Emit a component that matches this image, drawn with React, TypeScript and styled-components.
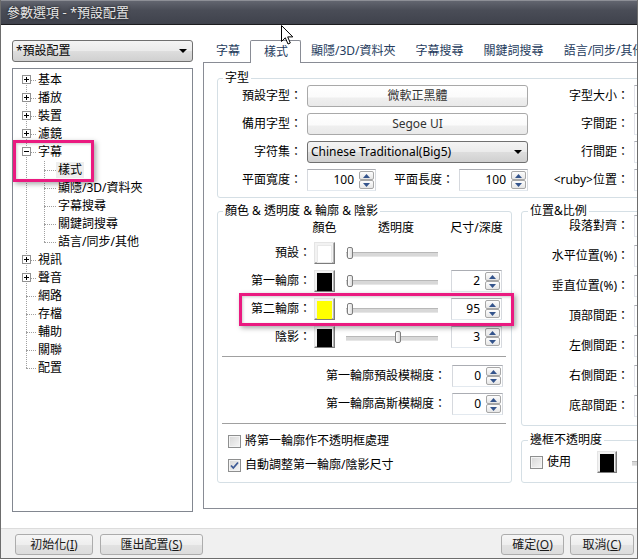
import React from "react";
import styled, { createGlobalStyle, css } from "styled-components";

const GlobalStyle = createGlobalStyle`
  html, body { margin: 0; padding: 0; background: #fff; }
  body {
    font-family: "Noto Sans", "Noto Sans CJK TC", sans-serif;
    font-size: 12px;
    line-height: 16px;
    color: #000;
  }
  * { box-sizing: border-box; }
`;

const Window = styled.div`
  position: relative;
  width: 638px;
  height: 559px;
  overflow: hidden;
  display: flex;
  flex-direction: column;
  background: #fff;
  border: 1px solid #6d6d6d;
  border-top: none;
`;

const TitleBar = styled.div`
  height: 25px;
  flex: none;
  margin: 0 -1px;
  padding-left: 7px;
  background: linear-gradient(#62656f, #4a4d57 40%, #3f424c);
  border-top: 1px solid #8d8f96;
  border-bottom: 1px solid #1c1c1f;
  color: #e6e6e6;
  font-size: 13px;
  line-height: 23px;
  text-shadow: 0 0 3px rgba(0, 0, 0, 0.8);
`;

const Body = styled.div`
  display: flex;
  align-items: flex-start;
  height: 503px;
  flex: none;
  padding-top: 15px;
`;

const Sidebar = styled.div`
  flex: none;
  width: 181px;
  margin-left: 11px;
  display: flex;
  flex-direction: column;
  gap: 6px;
`;

const DropBox = styled.div<{ $w?: number }>`
  width: ${p => (p.$w ? `${p.$w}px` : "100%")};
  height: 22px;
  display: flex;
  align-items: center;
  justify-content: space-between;
  padding: 0 5px 0 3px;
  border: 1px solid #707070;
  border-radius: 3px;
  background: linear-gradient(#f4f4f4, #ebebeb 48%, #dddddd 52%, #d0d0d0);
  white-space: nowrap;
`;

const DropArrow = styled.span`
  width: 0;
  height: 0;
  border-left: 4px solid transparent;
  border-right: 4px solid transparent;
  border-top: 4px solid #000;
`;

const Tree = styled.div`
  height: 444px;
  border: 1px solid #828790;
  padding-top: 2px;
`;

const TreeList = styled.div`
  position: relative;
  padding-left: 9px;
  &::before {
    content: "";
    position: absolute;
    left: 13px;
    top: 9px;
    height: 288px;
    border-left: 1px dotted #a0a0a0;
  }
`;

const TreeRow = styled.div<{ $child?: boolean }>`
  display: flex;
  align-items: center;
  height: 18px;
  margin-left: ${p => (p.$child ? 18 : 0)}px;
`;

const Branch = styled.span<{ $w: number }>`
  position: relative;
  flex: none;
  width: ${p => p.$w}px;
  height: 18px;
  &::after {
    content: "";
    position: absolute;
    left: 4px;
    right: 1px;
    top: 9px;
    border-top: 1px dotted #a0a0a0;
  }
`;

const ExpanderBox = styled.span`
  position: absolute;
  z-index: 1;
  left: 0;
  top: 4px;
  width: 9px;
  height: 9px;
  display: flex;
  background: #fff;
`;

const TreeLabel = styled.span<{ $selected?: boolean }>`
  padding: 0 1px;
  white-space: nowrap;
  ${p => p.$selected && css`
    background: #eeeeee;
    padding: 0 2px;
    margin-left: -1px;
  `}
`;

const ChildGroup = styled.div`
  position: relative;
  &::before {
    content: "";
    position: absolute;
    left: 22px;
    top: 0;
    height: 81px;
    border-left: 1px dotted #a0a0a0;
  }
`;

const TabArea = styled.div`
  margin-left: 10px;
  width: 470px;
  flex: none;
`;

const TabStrip = styled.div`
  display: flex;
  align-items: flex-end;
  height: 22px;
`;

const Tab = styled.div<{ $active?: boolean }>`
  height: 22px;
  padding: 0 10px;
  line-height: 22px;
  color: #263c5e;
  white-space: nowrap;
  &:first-child { margin-left: 3px; }
  ${p => p.$active && css`
    position: relative;
    z-index: 1;
    height: 23px;
    margin-bottom: -1px;
    padding: 0 12px 0 13px;
    line-height: 22px;
    background: #fff;
    border: 1px solid #898c95;
    border-bottom: none;
    border-radius: 2px 2px 0 0;
  `}
`;

const TabPanel = styled.div`
  height: 447px;
  border: 1px solid #898c95;
  padding-left: 13px;
  background: #fff;
`;

const Group = styled.div<{ $w?: number }>`
  position: relative;
  width: ${p => (p.$w ? `${p.$w}px` : "auto")};
  border: 1px solid #d5dfe5;
  border-radius: 3px;
`;

const Legend = styled.span<{ $left?: number }>`
  position: absolute;
  top: -9px;
  left: ${p => p.$left ?? 5}px;
  padding: 0 2px;
  background: #fff;
  white-space: nowrap;
`;

const FontGrid = styled.div`
  display: grid;
  grid-template-columns: 77px 221px 96px 40px;
  grid-auto-rows: 22px;
  column-gap: 5px;
  row-gap: 6px;
  align-items: center;
  padding: 6px 0 6px 7px;
`;

const Label = styled.span`
  text-align: right;
  white-space: nowrap;
`;

const FieldButton = styled.div`
  height: 22px;
  border: 1px solid #a9a9a9;
  border-radius: 3px;
  background: linear-gradient(#fff, #fbfbfb 55%, #efefef 60%, #e9e9e9);
  color: #333;
  text-align: center;
  line-height: 20px;
`;

const TextBox = styled.div`
  height: 22px;
  border: 1px solid #abadb3;
  border-color: #abadb3 #dbdfe6 #e3e9ef #e2e3ea;
  background: #fff;
`;

const PairRow = styled.div`
  display: flex;
  align-items: center;
`;

const SpinWrap = styled.div<{ $w: number }>`
  flex: none;
  width: ${p => p.$w}px;
  height: 22px;
  display: flex;
  align-items: center;
  padding: 1px;
  border: 1px solid #b9bcc2;
  border-color: #abadb3 #d6d9de #e3e9ef #d6d9de;
  background: #fff;
`;

const SpinValue = styled.span`
  flex: 1;
  text-align: right;
  padding-right: 5px;
`;

const SpinButtons = styled.div`
  display: flex;
  flex-direction: column;
  width: 15px;
  height: 18px;
`;

const SpinBtn = styled.div`
  flex: 1;
  display: flex;
  align-items: center;
  justify-content: center;
  border: 1px solid #a7a7a7;
  border-radius: 2px;
  background: linear-gradient(#fdfdfd, #e6e6e6);
`;

const LowerRow = styled.div`
  display: flex;
  align-items: flex-start;
  gap: 9px;
  margin-top: 13px;
`;

const ColorGrid = styled.div`
  display: grid;
  grid-template-columns: 96px 21px 116px 51px;
  grid-template-rows: 16px;
  grid-auto-rows: 22px;
  row-gap: 6px;
  align-items: center;
  padding-top: 8px;
`;

const RowLabel = styled.span`
  text-align: right;
  padding-right: 3px;
  white-space: nowrap;
`;

const ColHead = styled.span`
  justify-self: center;
  white-space: nowrap;
`;

const Swatch = styled.div<{ $color: string }>`
  width: 21px;
  height: 22px;
  padding: 2px;
  border: 1px solid;
  border-color: #e4e4e4 #7c7c7c #7c7c7c #e4e4e4;
  background: #f2f2f2;
  box-shadow: inset -1px -1px 0 #b4b4b4;
  &::after {
    content: "";
    display: block;
    height: 100%;
    background: ${p => p.$color};
    border: 1px solid ${p => (p.$color === "#ffffff" ? "#e8e8e8" : p.$color)};
  }
`;

const Slider = styled.div<{ $w?: number }>`
  position: relative;
  width: ${p => p.$w ?? 92}px;
  height: 22px;
  margin-left: 11px;
  &::before {
    content: "";
    position: absolute;
    left: 0;
    right: 0;
    top: 10px;
    height: 3px;
    border-top: 1px solid #b8b8b8;
    border-bottom: 1px solid #e6e6e6;
    background: #d8d8d8;
  }
`;

const Thumb = styled.div`
  position: absolute;
  top: 5px;
  width: 6px;
  height: 12px;
  border: 1px solid #7e7e7e;
  border-radius: 2px;
  background: linear-gradient(90deg, #fff, #dedede);
`;

const Separator = styled.div`
  margin: 8px 5px 0 4px;
  border-top: 1px solid #a0a0a0;
`;

const BlurRows = styled.div`
  display: flex;
  flex-direction: column;
  gap: 6px;
  margin-top: 8px;
  padding-right: 8px;
`;

const BlurRow = styled.div`
  display: flex;
  justify-content: flex-end;
  align-items: center;
  gap: 6px;
`;

const CheckRows = styled.div`
  display: flex;
  flex-direction: column;
  gap: 8px;
  padding: 9px 0 9px 10px;
`;

const CheckRow = styled.div`
  display: flex;
  align-items: center;
  gap: 4px;
  height: 16px;
  white-space: nowrap;
`;

const CheckBox = styled.span`
  flex: none;
  width: 13px;
  height: 13px;
  display: flex;
  border: 1px solid #8e8f8f;
  background: linear-gradient(135deg, #d6d6d6, #f6f6f6);
  box-shadow: inset 0 0 0 1px #f4f4f4;
`;

const RightCol = styled.div`
  display: flex;
  flex-direction: column;
  width: 150px;
  flex: none;
`;

const PosGrid = styled.div`
  display: grid;
  grid-template-columns: 107px 40px;
  grid-auto-rows: 22px;
  column-gap: 5px;
  row-gap: 8px;
  align-items: center;
  padding: 3px 0 8px 0;
`;

const BorderRow = styled.div`
  display: flex;
  align-items: center;
  height: 22px;
  margin: 10px 0 9px 8px;
  white-space: nowrap;
  gap: 4px;
`;

const Footer = styled.div`
  flex: 1;
  display: flex;
  justify-content: space-between;
  padding: 5px 3px 0 14px;
  background: #f0f0f0;
  border-top: 1px solid #dcdcdc;
`;

const ButtonGroup = styled.div<{ $gap: number }>`
  display: flex;
  gap: ${p => p.$gap}px;
`;

const Button = styled.div<{ $w: number }>`
  width: ${p => p.$w}px;
  height: 21px;
  border: 1px solid #acacac;
  border-radius: 3px;
  background: linear-gradient(#f6f6f6, #eeeeee 50%, #e2e2e2 52%, #dcdcdc);
  text-align: center;
  line-height: 19px;
  white-space: nowrap;
  color: #1a1a1a;
`;

const Highlight = styled.div`
  position: absolute;
  z-index: 5;
  border: 3px solid #ea1a80;
  box-shadow: 2px 2px 5px rgba(0, 0, 0, 0.35), inset 1px 1px 3px rgba(0, 0, 0, 0.2);
  pointer-events: none;
`;

const Cursor = styled.svg`
  position: absolute;
  z-index: 6;
  left: 280px;
  top: 25px;
`;

function Expander({ open }: { open?: boolean }) {
  return (
    <ExpanderBox>
      <svg width="9" height="9" viewBox="0 0 9 9">
        <rect x="0.5" y="0.5" width="8" height="8" fill="#fff" stroke="#919191" />
        <path d="M2 4.5h5" stroke="#000" />
        {!open && <path d="M4.5 2v5" stroke="#000" />}
      </svg>
    </ExpanderBox>
  );
}

function Spin({ value, w = 51 }: { value: string; w?: number }) {
  return (
    <SpinWrap $w={w}>
      <SpinValue>{value}</SpinValue>
      <SpinButtons>
        <SpinBtn>
          <svg width="7" height="4" viewBox="0 0 7 4"><path d="M0 4L3.5 0L7 4Z" fill="#34548c" /></svg>
        </SpinBtn>
        <SpinBtn>
          <svg width="7" height="4" viewBox="0 0 7 4"><path d="M0 0L3.5 4L7 0Z" fill="#34548c" /></svg>
        </SpinBtn>
      </SpinButtons>
    </SpinWrap>
  );
}

function Check({ checked }: { checked?: boolean }) {
  return (
    <CheckBox>
      {checked && (
        <svg width="11" height="11" viewBox="0 0 11 11">
          <path d="M2 5.5L4.3 8L9 2.5" fill="none" stroke="#3d5a96" strokeWidth="1.8" />
        </svg>
      )}
    </CheckBox>
  );
}

const topItems = ["基本", "播放", "裝置", "濾鏡"];
const subItems = ["樣式", "顯隱/3D/資料夾", "字幕搜尋", "關鍵詞搜尋", "語言/同步/其他"];
const lowerItems: [string, boolean][] = [
  ["視訊", true],
  ["聲音", true],
  ["網路", false],
  ["存檔", false],
  ["輔助", false],
  ["關聯", false],
  ["配置", false],
];

const tabs = ["字幕", "樣式", "顯隱/3D/資料夾", "字幕搜尋", "關鍵詞搜尋", "語言/同步/其他"];

const colorRows = [
  { label: "預設：", color: "#ffffff", pos: 1, size: null },
  { label: "第一輪廓：", color: "#000000", pos: 1, size: "2" },
  { label: "第二輪廓：", color: "#ffff00", pos: 1, size: "95" },
  { label: "陰影：", color: "#000000", pos: 49, size: "3" },
];

const posLabels = ["段落對齊：", "水平位置(%)：", "垂直位置(%)：", "頂部間距：", "左側間距：", "右側間距：", "底部間距："];

export default function App() {
  return (
    <Window>
      <GlobalStyle />
      <TitleBar>參數選項 - *預設配置</TitleBar>

      <Body>
        <Sidebar>
          <DropBox>
            <span>*預設配置</span>
            <DropArrow />
          </DropBox>
          <Tree>
            <TreeList>
              {topItems.map(t => (
                <TreeRow key={t}>
                  <Branch $w={15}><Expander /></Branch>
                  <TreeLabel>{t}</TreeLabel>
                </TreeRow>
              ))}
              <TreeRow>
                <Branch $w={15}><Expander open /></Branch>
                <TreeLabel>字幕</TreeLabel>
              </TreeRow>
              <ChildGroup>
                {subItems.map((t, i) => (
                  <TreeRow key={t} $child>
                    <Branch $w={17} />
                    <TreeLabel $selected={i === 0}>{t}</TreeLabel>
                  </TreeRow>
                ))}
              </ChildGroup>
              {lowerItems.map(([t, exp]) => (
                <TreeRow key={t}>
                  <Branch $w={15}>{exp && <Expander />}</Branch>
                  <TreeLabel>{t}</TreeLabel>
                </TreeRow>
              ))}
            </TreeList>
          </Tree>
        </Sidebar>

        <TabArea>
          <TabStrip>
            {tabs.map((t, i) => (
              <Tab key={t} $active={i === 1}>{t}</Tab>
            ))}
          </TabStrip>
          <TabPanel>
            <Group $w={440} style={{ marginTop: 15 }}>
              <Legend>字型</Legend>
              <FontGrid>
                <Label>預設字型：</Label>
                <FieldButton>微軟正黑體</FieldButton>
                <Label>字型大小：</Label>
                <TextBox />

                <Label>備用字型：</Label>
                <FieldButton>Segoe UI</FieldButton>
                <Label>字間距：</Label>
                <TextBox />

                <Label>字符集：</Label>
                <DropBox>
                  <span>Chinese Traditional(Big5)</span>
                  <DropArrow />
                </DropBox>
                <Label>行間距：</Label>
                <TextBox />

                <Label>平面寬度：</Label>
                <PairRow>
                  <Spin value="100" w={69} />
                  <Label style={{ flex: 1, paddingRight: 5 }}>平面長度：</Label>
                  <Spin value="100" w={69} />
                </PairRow>
                <Label>&lt;ruby&gt;位置：</Label>
                <TextBox />
              </FontGrid>
            </Group>

            <LowerRow>
              <Group $w={295}>
                <Legend>顏色 &amp; 透明度 &amp; 輪廓 &amp; 陰影</Legend>
                <ColorGrid>
                  <span />
                  <ColHead>顏色</ColHead>
                  <ColHead style={{ marginLeft: 6 }}>透明度</ColHead>
                  <ColHead>尺寸/深度</ColHead>
                  {colorRows.map(r => (
                    <React.Fragment key={r.label}>
                      <RowLabel>{r.label}</RowLabel>
                      <Swatch $color={r.color} />
                      <Slider>
                        <Thumb style={{ left: r.pos }} />
                      </Slider>
                      {r.size ? <Spin value={r.size} /> : <span />}
                    </React.Fragment>
                  ))}
                </ColorGrid>
                <Separator />
                <BlurRows>
                  <BlurRow>
                    <span>第一輪廓預設模糊度：</span>
                    <Spin value="0" />
                  </BlurRow>
                  <BlurRow>
                    <span>第一輪廓高斯模糊度：</span>
                    <Spin value="0" />
                  </BlurRow>
                </BlurRows>
                <Separator />
                <CheckRows>
                  <CheckRow>
                    <Check />
                    <span>將第一輪廓作不透明框處理</span>
                  </CheckRow>
                  <CheckRow>
                    <Check checked />
                    <span>自動調整第一輪廓/陰影尺寸</span>
                  </CheckRow>
                </CheckRows>
              </Group>

              <RightCol>
                <Group>
                  <Legend $left={6}>位置&amp;比例</Legend>
                  <PosGrid>
                    {posLabels.map(l => (
                      <React.Fragment key={l}>
                        <Label>{l}</Label>
                        <TextBox />
                      </React.Fragment>
                    ))}
                  </PosGrid>
                </Group>
                <Group style={{ marginTop: 14 }}>
                  <Legend $left={6}>邊框不透明度</Legend>
                  <BorderRow>
                    <Check />
                    <span>使用</span>
                    <Swatch $color="#000000" style={{ marginLeft: 22 }} />
                    <Slider $w={40} />
                  </BorderRow>
                </Group>
              </RightCol>
            </LowerRow>
          </TabPanel>
        </TabArea>
      </Body>

      <Footer>
        <ButtonGroup $gap={7}>
          <Button $w={78}>初始化(<u>I</u>)</Button>
          <Button $w={103}>匯出配置(<u>S</u>)</Button>
        </ButtonGroup>
        <ButtonGroup $gap={6}>
          <Button $w={63}>確定(<u>O</u>)</Button>
          <Button $w={64}>取消(<u>C</u>)</Button>
        </ButtonGroup>
      </Footer>

      <Highlight style={{ left: 12, top: 140, width: 81, height: 42 }} />
      <Highlight style={{ left: 238, top: 293, width: 275, height: 33 }} />

      <Cursor width="13" height="20" viewBox="0 0 13 20">
        <path d="M0.5 0.5V16.5L4.3 12.8L7 19L9.3 18L6.7 11.9H11.8Z" fill="#fff" stroke="#000" strokeLinejoin="round" />
      </Cursor>
    </Window>
  );
}
